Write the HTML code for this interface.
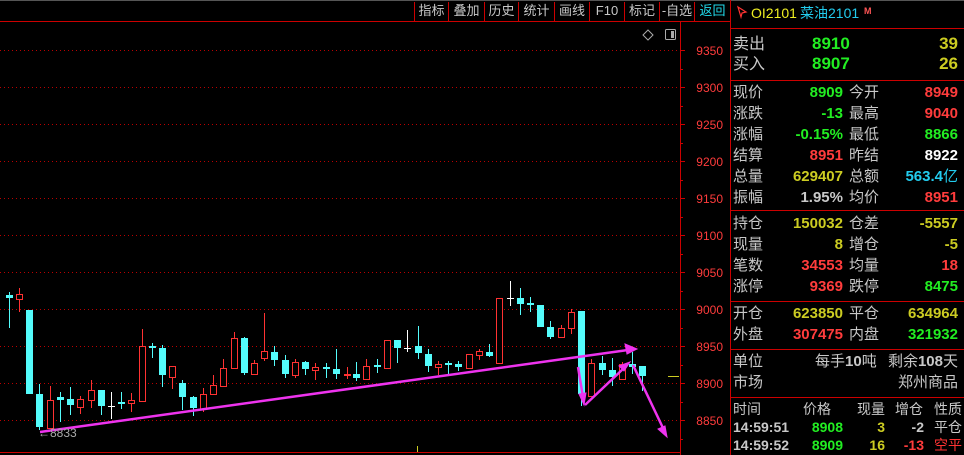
<!DOCTYPE html>
<html><head><meta charset="utf-8"><style>
html,body{margin:0;padding:0;background:#000;width:964px;height:455px;overflow:hidden}
body{position:relative;font-family:"Liberation Sans","Noto Sans CJK SC",sans-serif}
.t{position:absolute;white-space:nowrap;font-size:15px;line-height:18px}
.l{color:#c8c8c8}
.g{color:#22ee22;font-weight:bold}
.r{color:#ff3c3c;font-weight:bold}
.y{color:#cccc22;font-weight:bold}
.w{color:#fff;font-weight:bold}
.c{color:#22ccee;font-weight:bold}
.tb{position:absolute;top:3px;font-size:13px;color:#c8c8c8;text-align:center;line-height:16px}
</style></head><body>
<svg width="964" height="455" style="position:absolute;left:0;top:0">
<line x1="0" y1="0.5" x2="964" y2="0.5" stroke="#555"/>
<line x1="0" y1="21.5" x2="731" y2="21.5" stroke="#c00"/>
<g stroke="#c00">
<line x1="414.5" y1="2" x2="414.5" y2="21"/><line x1="448.5" y1="2" x2="448.5" y2="21"/><line x1="484.5" y1="2" x2="484.5" y2="21"/><line x1="518.5" y1="2" x2="518.5" y2="21"/><line x1="554.5" y1="2" x2="554.5" y2="21"/><line x1="589.5" y1="2" x2="589.5" y2="21"/><line x1="624.5" y1="2" x2="624.5" y2="21"/><line x1="659.5" y1="2" x2="659.5" y2="21"/><line x1="694.5" y1="2" x2="694.5" y2="21"/>
<line x1="730.5" y1="0" x2="730.5" y2="455"/>
<line x1="680.5" y1="22" x2="680.5" y2="455"/>
<line x1="0" y1="452.5" x2="680" y2="452.5"/>
<line x1="731" y1="28.5" x2="964" y2="28.5"/>
<line x1="731" y1="80.5" x2="964" y2="80.5"/>
<line x1="731" y1="210.5" x2="964" y2="210.5"/>
<line x1="731" y1="301.5" x2="964" y2="301.5"/>
<line x1="731" y1="349.5" x2="964" y2="349.5"/>
<line x1="731" y1="397.5" x2="964" y2="397.5"/>
</g>
<g stroke="#b00" stroke-dasharray="1,3">
<line x1="0" y1="50.5" x2="680" y2="50.5"/><line x1="0" y1="87.5" x2="680" y2="87.5"/><line x1="0" y1="124.5" x2="680" y2="124.5"/><line x1="0" y1="161.5" x2="680" y2="161.5"/><line x1="0" y1="198.5" x2="680" y2="198.5"/><line x1="0" y1="235.5" x2="680" y2="235.5"/><line x1="0" y1="272.5" x2="680" y2="272.5"/><line x1="0" y1="309.5" x2="680" y2="309.5"/><line x1="0" y1="346.5" x2="680" y2="346.5"/><line x1="0" y1="383.5" x2="680" y2="383.5"/><line x1="0" y1="420.5" x2="680" y2="420.5"/>
</g>
<g stroke="#c00">
<line x1="680" y1="50.5" x2="685" y2="50.5"/><line x1="680" y1="69.5" x2="683" y2="69.5"/><line x1="680" y1="87.5" x2="685" y2="87.5"/><line x1="680" y1="106.5" x2="683" y2="106.5"/><line x1="680" y1="124.5" x2="685" y2="124.5"/><line x1="680" y1="143.5" x2="683" y2="143.5"/><line x1="680" y1="161.5" x2="685" y2="161.5"/><line x1="680" y1="180.5" x2="683" y2="180.5"/><line x1="680" y1="198.5" x2="685" y2="198.5"/><line x1="680" y1="217.5" x2="683" y2="217.5"/><line x1="680" y1="235.5" x2="685" y2="235.5"/><line x1="680" y1="254.5" x2="683" y2="254.5"/><line x1="680" y1="272.5" x2="685" y2="272.5"/><line x1="680" y1="291.5" x2="683" y2="291.5"/><line x1="680" y1="309.5" x2="685" y2="309.5"/><line x1="680" y1="328.5" x2="683" y2="328.5"/><line x1="680" y1="346.5" x2="685" y2="346.5"/><line x1="680" y1="365.5" x2="683" y2="365.5"/><line x1="680" y1="383.5" x2="685" y2="383.5"/><line x1="680" y1="402.5" x2="683" y2="402.5"/><line x1="680" y1="420.5" x2="685" y2="420.5"/><line x1="680" y1="439.5" x2="683" y2="439.5"/>
</g>
<g fill="#ff3c3c" font-family="Liberation Sans" font-size="12" text-anchor="end">
<text x="723" y="55">9350</text><text x="723" y="92">9300</text><text x="723" y="129">9250</text><text x="723" y="166">9200</text><text x="723" y="203">9150</text><text x="723" y="240">9100</text><text x="723" y="277">9050</text><text x="723" y="314">9000</text><text x="723" y="351">8950</text><text x="723" y="388">8900</text><text x="723" y="425">8850</text>
</g>
<path d="M648 30 l5 5 l-5 5 l-5 -5z" fill="none" stroke="#aaa"/>
<rect x="665.5" y="29.5" width="10" height="10" fill="none" stroke="#aaa" rx="1"/><rect x="671" y="31" width="3" height="7" fill="#aaa"/>
<line x1="668" y1="376.5" x2="679" y2="376.5" stroke="#cc2"/>
<line x1="417.5" y1="446" x2="417.5" y2="452" stroke="#cc2"/>
<g stroke-width="1">
<g stroke="#54fcfc">
<line x1="9.5" y1="292" x2="9.5" y2="328"/><line x1="39.5" y1="384" x2="39.5" y2="430"/><line x1="60.5" y1="392" x2="60.5" y2="422"/><line x1="70.5" y1="387" x2="70.5" y2="415"/><line x1="101.5" y1="390" x2="101.5" y2="415"/><line x1="121.5" y1="392" x2="121.5" y2="409"/><line x1="152.5" y1="343" x2="152.5" y2="358"/><line x1="162.5" y1="345" x2="162.5" y2="387"/><line x1="182.5" y1="380" x2="182.5" y2="410"/><line x1="193.5" y1="396" x2="193.5" y2="416"/><line x1="244.5" y1="337" x2="244.5" y2="375"/><line x1="274.5" y1="346" x2="274.5" y2="366"/><line x1="285.5" y1="355" x2="285.5" y2="378"/><line x1="305.5" y1="361" x2="305.5" y2="375"/><line x1="326.5" y1="363" x2="326.5" y2="378"/><line x1="336.5" y1="349" x2="336.5" y2="379"/><line x1="356.5" y1="362" x2="356.5" y2="381"/><line x1="377.5" y1="359" x2="377.5" y2="373"/><line x1="397.5" y1="340" x2="397.5" y2="363"/><line x1="418.5" y1="326" x2="418.5" y2="359"/><line x1="428.5" y1="349" x2="428.5" y2="372"/><line x1="448.5" y1="361" x2="448.5" y2="374"/><line x1="458.5" y1="361" x2="458.5" y2="371"/><line x1="489.5" y1="344" x2="489.5" y2="357"/><line x1="520.5" y1="288" x2="520.5" y2="315"/><line x1="530.5" y1="297" x2="530.5" y2="312"/><line x1="540.5" y1="305" x2="540.5" y2="327"/><line x1="550.5" y1="321" x2="550.5" y2="339"/><line x1="581.5" y1="311" x2="581.5" y2="406"/><line x1="602.5" y1="356" x2="602.5" y2="375"/><line x1="612.5" y1="358" x2="612.5" y2="386"/><line x1="632.5" y1="352" x2="632.5" y2="374"/><line x1="642.5" y1="366" x2="642.5" y2="391"/>
</g>
<g stroke="#ff3232">
<line x1="19.5" y1="288" x2="19.5" y2="312"/><line x1="50.5" y1="386" x2="50.5" y2="429"/><line x1="80.5" y1="396" x2="80.5" y2="414"/><line x1="91.5" y1="380" x2="91.5" y2="408"/><line x1="131.5" y1="393" x2="131.5" y2="412"/><line x1="142.5" y1="329" x2="142.5" y2="401"/><line x1="172.5" y1="366" x2="172.5" y2="389"/><line x1="203.5" y1="388" x2="203.5" y2="412"/><line x1="213.5" y1="375" x2="213.5" y2="395"/><line x1="223.5" y1="359" x2="223.5" y2="387"/><line x1="234.5" y1="332" x2="234.5" y2="368"/><line x1="254.5" y1="360" x2="254.5" y2="374"/><line x1="264.5" y1="313" x2="264.5" y2="361"/><line x1="295.5" y1="359" x2="295.5" y2="378"/><line x1="315.5" y1="363" x2="315.5" y2="380"/><line x1="347.5" y1="367" x2="347.5" y2="379"/><line x1="366.5" y1="359" x2="366.5" y2="379"/><line x1="387.5" y1="340" x2="387.5" y2="368"/><line x1="438.5" y1="361" x2="438.5" y2="375"/><line x1="469.5" y1="354" x2="469.5" y2="368"/><line x1="479.5" y1="349" x2="479.5" y2="360"/><line x1="499.5" y1="298" x2="499.5" y2="363"/><line x1="561.5" y1="325" x2="561.5" y2="337"/><line x1="571.5" y1="309" x2="571.5" y2="334"/><line x1="591.5" y1="359" x2="591.5" y2="396"/><line x1="622.5" y1="362" x2="622.5" y2="379"/>
</g>
<g stroke="#fff">
<line x1="111.5" y1="392" x2="111.5" y2="419"/><line x1="108" y1="406.5" x2="115" y2="406.5"/>
<line x1="407.5" y1="330" x2="407.5" y2="352"/><line x1="404" y1="348.5" x2="411" y2="348.5"/>
<line x1="510.5" y1="281" x2="510.5" y2="306"/><line x1="507" y1="298.5" x2="514" y2="298.5"/>
</g>
</g>
<g fill="#54fcfc">
<rect x="6" y="295" width="7" height="3"/><rect x="26" y="310" width="7" height="84"/><rect x="36" y="394" width="7" height="33"/><rect x="57" y="397" width="7" height="3"/><rect x="67" y="399" width="7" height="6"/><rect x="98" y="390" width="7" height="16"/><rect x="118" y="402" width="7" height="2"/><rect x="149" y="346" width="7" height="2"/><rect x="159" y="348" width="7" height="27"/><rect x="179" y="383" width="7" height="14"/><rect x="190" y="397" width="7" height="11"/><rect x="241" y="338" width="7" height="35"/><rect x="271" y="352" width="7" height="8"/><rect x="282" y="360" width="7" height="14"/><rect x="302" y="362" width="7" height="7"/><rect x="323" y="367" width="7" height="2"/><rect x="333" y="369" width="7" height="5"/><rect x="353" y="374" width="7" height="4"/><rect x="374" y="365" width="7" height="2"/><rect x="394" y="340" width="7" height="8"/><rect x="415" y="346" width="7" height="7"/><rect x="425" y="354" width="7" height="12"/><rect x="445" y="363" width="7" height="2"/><rect x="455" y="364" width="7" height="3"/><rect x="486" y="352" width="7" height="4"/><rect x="517" y="298" width="7" height="6"/><rect x="527" y="303" width="7" height="2"/><rect x="537" y="305" width="7" height="22"/><rect x="547" y="327" width="7" height="10"/><rect x="578" y="311" width="7" height="83"/><rect x="599" y="363" width="7" height="7"/><rect x="609" y="370" width="7" height="7"/><rect x="629" y="364" width="7" height="3"/><rect x="639" y="366" width="7" height="10"/>
</g>
<g fill="#000" stroke="#ff3232">
<rect x="16.5" y="294.5" width="6" height="5"/><rect x="47.5" y="400.5" width="6" height="28"/><rect x="77.5" y="399.5" width="6" height="8"/><rect x="88.5" y="390.5" width="6" height="10"/><rect x="128.5" y="400.5" width="6" height="3"/><rect x="139.5" y="346.5" width="6" height="55"/><rect x="169.5" y="366.5" width="6" height="11"/><rect x="200.5" y="394.5" width="6" height="15"/><rect x="210.5" y="385.5" width="6" height="9"/><rect x="220.5" y="368.5" width="6" height="18"/><rect x="231.5" y="338.5" width="6" height="30"/><rect x="251.5" y="363.5" width="6" height="11"/><rect x="261.5" y="351.5" width="6" height="7"/><rect x="292.5" y="362.5" width="6" height="13"/><rect x="312.5" y="367.5" width="6" height="3"/><rect x="344.5" y="374.5" width="6" height="1"/><rect x="363.5" y="366.5" width="6" height="13"/><rect x="384.5" y="340.5" width="6" height="28"/><rect x="435.5" y="364.5" width="6" height="3"/><rect x="466.5" y="354.5" width="6" height="14"/><rect x="476.5" y="351.5" width="6" height="4"/><rect x="496.5" y="298.5" width="6" height="65"/><rect x="558.5" y="328.5" width="6" height="9"/><rect x="568.5" y="312.5" width="6" height="16"/><rect x="588.5" y="363.5" width="6" height="33"/><rect x="619.5" y="364.5" width="6" height="15"/>
</g>
<g stroke="#ee33ee" stroke-width="2.5" fill="#ee33ee">
<line x1="40" y1="432" x2="628" y2="350"/>
<path d="M637 349 l-12 -5 l2 10z" stroke-width="1"/>
<line x1="578" y1="367" x2="583" y2="397"/>
<path d="M584 405 l-5 -11 l7 -1z" stroke-width="1"/>
<line x1="585" y1="405" x2="624" y2="368"/>
<path d="M630 362 l-11 4 l5 5z" stroke-width="1"/>
<line x1="633" y1="365" x2="663" y2="428"/>
<path d="M667 437 l-9 -8 l7 -3z" stroke-width="1"/>
</g>
<text x="38" y="437" fill="#aaa" font-family="Liberation Sans" font-size="12">←8833</text>
<path d="M738 7 l8 5 l-4 1 l-1 4z" fill="none" stroke="#f33" stroke-width="1.2"/>
</svg>
<div class="tb" style="left:415px;width:33px">指标</div>
<div class="tb" style="left:449px;width:35px">叠加</div>
<div class="tb" style="left:485px;width:33px">历史</div>
<div class="tb" style="left:519px;width:35px">统计</div>
<div class="tb" style="left:555px;width:34px">画线</div>
<div class="tb" style="left:590px;width:34px">F10</div>
<div class="tb" style="left:625px;width:34px">标记</div>
<div class="tb" style="left:660px;width:34px">-自选</div>
<div class="tb" style="left:695px;width:35px;color:#22ddee">返回</div>
<div class="t" style="left:751px;top:4px;color:#ee2;font-size:14px">OI2101</div>
<div class="t" style="left:800px;top:4px;color:#22ccee;font-size:14px">菜油2101</div>
<div class="t" style="left:864px;top:2px;color:#f55;font-size:9px;font-weight:bold">M</div>

<div class="t l" style="left:733px;top:36px;font-size:16px">卖出</div>
<div class="t g" style="left:812px;top:35px;font-size:17px">8910</div>
<div class="t y" style="right:6px;top:35px;font-size:17px">39</div>
<div class="t l" style="left:733px;top:56px;font-size:16px">买入</div>
<div class="t g" style="left:812px;top:55px;font-size:17px">8907</div>
<div class="t y" style="right:6px;top:55px;font-size:17px">26</div>

<div class="t l" style="left:733px;top:84px">现价</div><div class="t g" style="right:121px;top:84px">8909</div><div class="t l" style="left:849px;top:84px">今开</div><div class="t r" style="right:6px;top:84px">8949</div>
<div class="t l" style="left:733px;top:105px">涨跌</div><div class="t g" style="right:121px;top:105px">-13</div><div class="t l" style="left:849px;top:105px">最高</div><div class="t r" style="right:6px;top:105px">9040</div>
<div class="t l" style="left:733px;top:126px">涨幅</div><div class="t g" style="right:121px;top:126px">-0.15%</div><div class="t l" style="left:849px;top:126px">最低</div><div class="t g" style="right:6px;top:126px">8866</div>
<div class="t l" style="left:733px;top:147px">结算</div><div class="t r" style="right:121px;top:147px">8951</div><div class="t l" style="left:849px;top:147px">昨结</div><div class="t w" style="right:6px;top:147px">8922</div>
<div class="t l" style="left:733px;top:168px">总量</div><div class="t y" style="right:121px;top:168px">629407</div><div class="t l" style="left:849px;top:168px">总额</div><div class="t c" style="right:6px;top:168px">563.4<span style="font-weight:normal">亿</span></div>
<div class="t l" style="left:733px;top:189px">振幅</div><div class="t l" style="right:121px;top:189px;font-weight:bold">1.95%</div><div class="t l" style="left:849px;top:189px">均价</div><div class="t r" style="right:6px;top:189px">8951</div>

<div class="t l" style="left:733px;top:215px">持仓</div><div class="t y" style="right:121px;top:215px">150032</div><div class="t l" style="left:849px;top:215px">仓差</div><div class="t y" style="right:6px;top:215px">-5557</div>
<div class="t l" style="left:733px;top:236px">现量</div><div class="t y" style="right:121px;top:236px">8</div><div class="t l" style="left:849px;top:236px">增仓</div><div class="t y" style="right:6px;top:236px">-5</div>
<div class="t l" style="left:733px;top:257px">笔数</div><div class="t r" style="right:121px;top:257px">34553</div><div class="t l" style="left:849px;top:257px">均量</div><div class="t r" style="right:6px;top:257px">18</div>
<div class="t l" style="left:733px;top:278px">涨停</div><div class="t r" style="right:121px;top:278px">9369</div><div class="t l" style="left:849px;top:278px">跌停</div><div class="t g" style="right:6px;top:278px">8475</div>

<div class="t l" style="left:733px;top:305px">开仓</div><div class="t y" style="right:121px;top:305px">623850</div><div class="t l" style="left:849px;top:305px">平仓</div><div class="t y" style="right:6px;top:305px">634964</div>
<div class="t l" style="left:733px;top:326px">外盘</div><div class="t r" style="right:121px;top:326px">307475</div><div class="t l" style="left:849px;top:326px">内盘</div><div class="t g" style="right:6px;top:326px">321932</div>

<div class="t l" style="left:733px;top:353px">单位</div><div class="t l" style="left:815px;top:353px">每手<b>10</b>吨</div><div class="t l" style="right:6px;top:353px">剩余<b>108</b>天</div>
<div class="t l" style="left:733px;top:374px">市场</div><div class="t l" style="right:6px;top:374px">郑州商品</div>

<div class="t l" style="left:733px;top:400px;font-size:14px">时间</div><div class="t l" style="left:803px;top:400px;font-size:14px">价格</div><div class="t l" style="left:857px;top:400px;font-size:14px">现量</div><div class="t l" style="left:895px;top:400px;font-size:14px">增仓</div><div class="t l" style="left:934px;top:400px;font-size:14px">性质</div>
<div class="t l" style="left:733px;top:418px;font-size:14px;font-weight:bold">14:59:51</div><div class="t g" style="right:121px;top:418px;font-size:14px">8908</div><div class="t y" style="right:79px;top:418px;font-size:14px">3</div><div class="t l" style="right:40px;top:418px;font-size:14px;font-weight:bold">-2</div><div class="t l" style="right:2px;top:418px;font-size:14px">平仓</div>
<div class="t l" style="left:733px;top:436px;font-size:14px;font-weight:bold">14:59:52</div><div class="t g" style="right:121px;top:436px;font-size:14px">8909</div><div class="t y" style="right:79px;top:436px;font-size:14px">16</div><div class="t r" style="right:40px;top:436px;font-size:14px">-13</div><div class="t" style="right:2px;top:436px;font-size:14px;color:#f33">空平</div>
</body></html>
